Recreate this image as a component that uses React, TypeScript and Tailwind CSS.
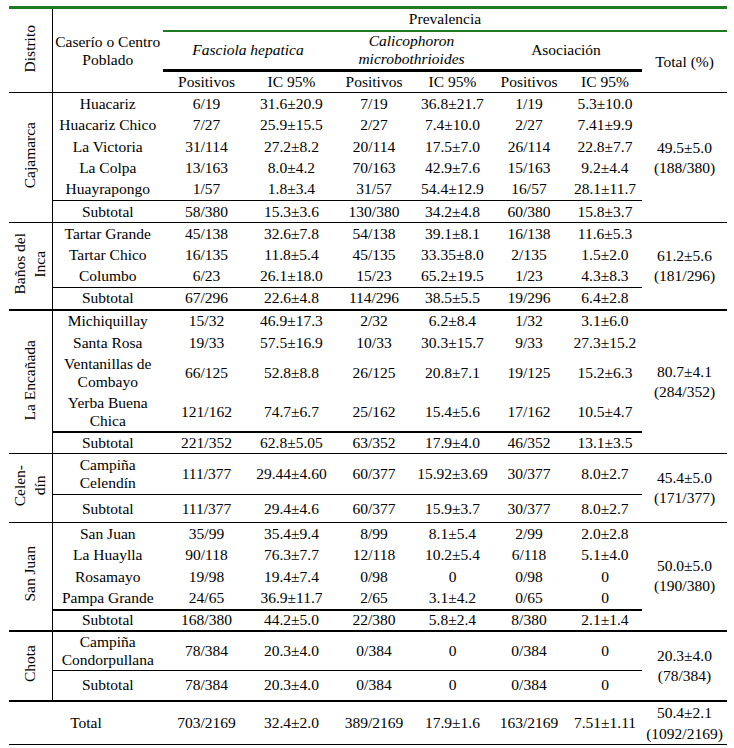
import React from "react";

type Row = {
  name: string[];
  vals: string[];
  h: string;
};

type Group = {
  distrito: string[];
  rows: Row[];
  subtotal: Row;
  total: string[];
  midLine: string;
  endLine: string;
};

const groups: Group[] = [
  {
    distrito: ["Cajamarca"],
    rows: [
      { name: ["Huacariz"], vals: ["6/19", "31.6±20.9", "7/19", "36.8±21.7", "1/19", "5.3±10.0"], h: "h-[22px]" },
      { name: ["Huacariz Chico"], vals: ["7/27", "25.9±15.5", "2/27", "7.4±10.0", "2/27", "7.41±9.9"], h: "h-[21px]" },
      { name: ["La Victoria"], vals: ["31/114", "27.2±8.2", "20/114", "17.5±7.0", "26/114", "22.8±7.7"], h: "h-[22px]" },
      { name: ["La Colpa"], vals: ["13/163", "8.0±4.2", "70/163", "42.9±7.6", "15/163", "9.2±4.4"], h: "h-[21px]" },
      { name: ["Huayrapongo"], vals: ["1/57", "1.8±3.4", "31/57", "54.4±12.9", "16/57", "28.1±11.7"], h: "h-[22px]" },
    ],
    subtotal: { name: ["Subtotal"], vals: ["58/380", "15.3±3.6", "130/380", "34.2±4.8", "60/380", "15.8±3.7"], h: "h-[22px]" },
    total: ["49.5±5.0", "(188/380)"],
    midLine: "border-b",
    endLine: "border-b",
  },
  {
    distrito: ["Baños del", "Inca"],
    rows: [
      { name: ["Tartar Grande"], vals: ["45/138", "32.6±7.8", "54/138", "39.1±8.1", "16/138", "11.6±5.3"], h: "h-[22px]" },
      { name: ["Tartar Chico"], vals: ["16/135", "11.8±5.4", "45/135", "33.35±8.0", "2/135", "1.5±2.0"], h: "h-[21px]" },
      { name: ["Columbo"], vals: ["6/23", "26.1±18.0", "15/23", "65.2±19.5", "1/23", "4.3±8.3"], h: "h-[22px]" },
    ],
    subtotal: { name: ["Subtotal"], vals: ["67/296", "22.6±4.8", "114/296", "38.5±5.5", "19/296", "6.4±2.8"], h: "h-[22px]" },
    total: ["61.2±5.6", "(181/296)"],
    midLine: "border-b",
    endLine: "border-b-2",
  },
  {
    distrito: ["La Encañada"],
    rows: [
      { name: ["Michiquillay"], vals: ["15/32", "46.9±17.3", "2/32", "6.2±8.4", "1/32", "3.1±6.0"], h: "h-[22px]" },
      { name: ["Santa Rosa"], vals: ["19/33", "57.5±16.9", "10/33", "30.3±15.7", "9/33", "27.3±15.2"], h: "h-[22px]" },
      { name: ["Ventanillas de", "Combayo"], vals: ["66/125", "52.8±8.8", "26/125", "20.8±7.1", "19/125", "15.2±6.3"], h: "h-[39px]" },
      { name: ["Yerba Buena", "Chica"], vals: ["121/162", "74.7±6.7", "25/162", "15.4±5.6", "17/162", "10.5±4.7"], h: "h-[39px]" },
    ],
    subtotal: { name: ["Subtotal"], vals: ["221/352", "62.8±5.05", "63/352", "17.9±4.0", "46/352", "13.1±3.5"], h: "h-[22px]" },
    total: ["80.7±4.1", "(284/352)"],
    midLine: "border-b-2",
    endLine: "border-b",
  },
  {
    distrito: ["Celen-", "dín"],
    rows: [
      { name: ["Campiña", "Celendín"], vals: ["111/377", "29.44±4.60", "60/377", "15.92±3.69", "30/377", "8.0±2.7"], h: "h-[41px]" },
    ],
    subtotal: { name: ["Subtotal"], vals: ["111/377", "29.4±4.6", "60/377", "15.9±3.7", "30/377", "8.0±2.7"], h: "h-[28px]" },
    total: ["45.4±5.0", "(171/377)"],
    midLine: "border-b",
    endLine: "border-b",
  },
  {
    distrito: ["San Juan"],
    rows: [
      { name: ["San Juan"], vals: ["35/99", "35.4±9.4", "8/99", "8.1±5.4", "2/99", "2.0±2.8"], h: "h-[22px]" },
      { name: ["La Huaylla"], vals: ["90/118", "76.3±7.7", "12/118", "10.2±5.4", "6/118", "5.1±4.0"], h: "h-[21px]" },
      { name: ["Rosamayo"], vals: ["19/98", "19.4±7.4", "0/98", "0", "0/98", "0"], h: "h-[22px]" },
      { name: ["Pampa Grande"], vals: ["24/65", "36.9±11.7", "2/65", "3.1±4.2", "0/65", "0"], h: "h-[22px]" },
    ],
    subtotal: { name: ["Subtotal"], vals: ["168/380", "44.2±5.0", "22/380", "5.8±2.4", "8/380", "2.1±1.4"], h: "h-[21px]" },
    total: ["50.0±5.0", "(190/380)"],
    midLine: "border-b-2",
    endLine: "border-b-2",
  },
  {
    distrito: ["Chota"],
    rows: [
      { name: ["Campiña", "Condorpullana"], vals: ["78/384", "20.3±4.0", "0/384", "0", "0/384", "0"], h: "h-[40px]" },
    ],
    subtotal: { name: ["Subtotal"], vals: ["78/384", "20.3±4.0", "0/384", "0", "0/384", "0"], h: "h-[30px]" },
    total: ["20.3±4.0", "(78/384)"],
    midLine: "border-b",
    endLine: "border-b-2",
  },
];

const cell = "p-0 text-center align-middle leading-[18px] border-black";

const Lines = ({ lines }: { lines: string[] }) => (
  <>
    {lines.map((l, i) => (
      <React.Fragment key={i}>
        {i > 0 && <br />}
        {l}
      </React.Fragment>
    ))}
  </>
);

const App = () => {
  return (
    <div className="w-[734px] h-[748px] bg-white pt-[6px] pl-[9px] font-['Liberation_Serif',serif] text-[15.5px] text-black">
      <table className="w-[718px] table-fixed border-collapse border-t-[3px] border-[#1e7b1e]">
        <colgroup>
          <col className="w-[43px]" />
          <col className="w-[111px]" />
          <col className="w-[87px]" />
          <col className="w-[83px]" />
          <col className="w-[82px]" />
          <col className="w-[75px]" />
          <col className="w-[78px]" />
          <col className="w-[74px]" />
          <col className="w-[85px]" />
        </colgroup>
        <tbody>
          {/* header */}
          <tr className="h-[23px]">
            <td rowSpan={3} className={`${cell} border-r border-b`}>
              <span className="inline-block [writing-mode:vertical-rl] rotate-180">Distrito</span>
            </td>
            <td rowSpan={3} className={`${cell} border-b`}>
              Caserío o Centro
              <br />
              Poblado
            </td>
            <td colSpan={7} className={`${cell} border-b-2 border-b-[#1e7b1e]`}>
              Prevalencia
            </td>
          </tr>
          <tr className="h-[40px]">
            <td colSpan={2} className={`${cell} italic border-b-[3px]`}>
              Fasciola hepatica
            </td>
            <td colSpan={2} className={`${cell} italic border-b-[3px]`}>
              Calicophoron
              <br />
              microbothrioides
            </td>
            <td colSpan={2} className={`${cell} border-b-[3px]`}>
              Asociación
            </td>
            <td rowSpan={2} className={`${cell} border-b`}>
              Total (%)
            </td>
          </tr>
          <tr className="h-[22px]">
            {["Positivos", "IC 95%", "Positivos", "IC 95%", "Positivos", "IC 95%"].map((t, i) => (
              <td key={i} className={`${cell} border-b`}>
                {t}
              </td>
            ))}
          </tr>

          {/* districts */}
          {groups.map((g, gi) => (
            <React.Fragment key={gi}>
              {g.rows.map((r, ri) => {
                const last = ri === g.rows.length - 1;
                const line = last ? g.midLine : "";
                return (
                  <tr key={ri} className={r.h}>
                    {ri === 0 && (
                      <td rowSpan={g.rows.length + 1} className={`${cell} border-r ${g.endLine}`}>
                        <span className="inline-block [writing-mode:vertical-rl] rotate-180 leading-[20px]">
                          <Lines lines={g.distrito} />
                        </span>
                      </td>
                    )}
                    <td className={`${cell} ${line}`}>
                      <Lines lines={r.name} />
                    </td>
                    {r.vals.map((v, vi) => (
                      <td key={vi} className={`${cell} ${line}`}>
                        {v}
                      </td>
                    ))}
                    {ri === 0 && (
                      <td rowSpan={g.rows.length + 1} className={`${cell} leading-[20px] ${g.endLine}`}>
                        <Lines lines={g.total} />
                      </td>
                    )}
                  </tr>
                );
              })}
              <tr className={g.subtotal.h}>
                <td className={`${cell} ${g.endLine}`}>Subtotal</td>
                {g.subtotal.vals.map((v, vi) => (
                  <td key={vi} className={`${cell} ${g.endLine}`}>
                    {v}
                  </td>
                ))}
              </tr>
            </React.Fragment>
          ))}

          {/* total */}
          <tr className="h-[38px]">
            <td colSpan={2} className={`${cell} border-b`}>
              Total
            </td>
            {["703/2169", "32.4±2.0", "389/2169", "17.9±1.6", "163/2169", "7.51±1.11"].map((v, i) => (
              <td key={i} className={`${cell} border-b`}>
                {v}
              </td>
            ))}
            <td className={`${cell} border-b leading-[21px]`}>
              50.4±2.1
              <br />
              (1092/2169)
            </td>
          </tr>
        </tbody>
      </table>
    </div>
  );
};

export default App;
